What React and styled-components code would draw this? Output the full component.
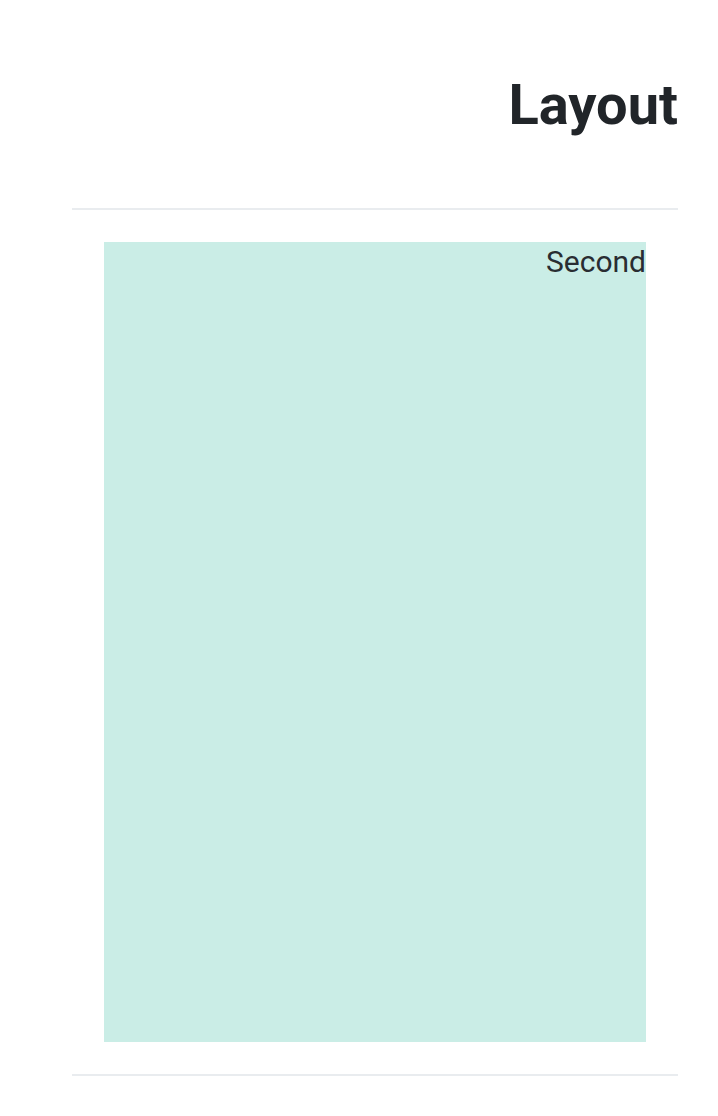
import React from 'react';
import styled, { createGlobalStyle } from 'styled-components';

const GlobalStyle = createGlobalStyle`
  body {
    margin: 0;
    background: #ffffff;
    font-family: Roboto, "Liberation Sans", sans-serif;
    color: #212529;
  }
`;

const Page = styled.div`
  padding: 72px 40px 0 72px;
`;

const Header = styled.header`
  display: flex;
  justify-content: flex-end;
  padding-bottom: 69px;
  border-bottom: 2px solid #e9ecef;
`;

const Title = styled.h1`
  margin: 0;
  font-size: 56px;
  line-height: 1.2;
  font-weight: 700;
  color: #212529;
`;

const Section = styled.section`
  padding: 32px;
  border-bottom: 2px solid #e9ecef;
`;

const Panel = styled.div`
  height: 800px;
  background: #caede6;
  display: flex;
  flex-direction: column;
  align-items: flex-end;
`;

const PanelLabel = styled.span`
  font-size: 30px;
  line-height: 1.3;
  color: #292d32;
`;

const App = () => {
  return (
    <>
      <GlobalStyle />
      <Page>
        <Header>
          <Title>Layout</Title>
        </Header>
        <Section>
          <Panel>
            <PanelLabel>Second</PanelLabel>
          </Panel>
        </Section>
      </Page>
    </>
  );
};

export default App;
